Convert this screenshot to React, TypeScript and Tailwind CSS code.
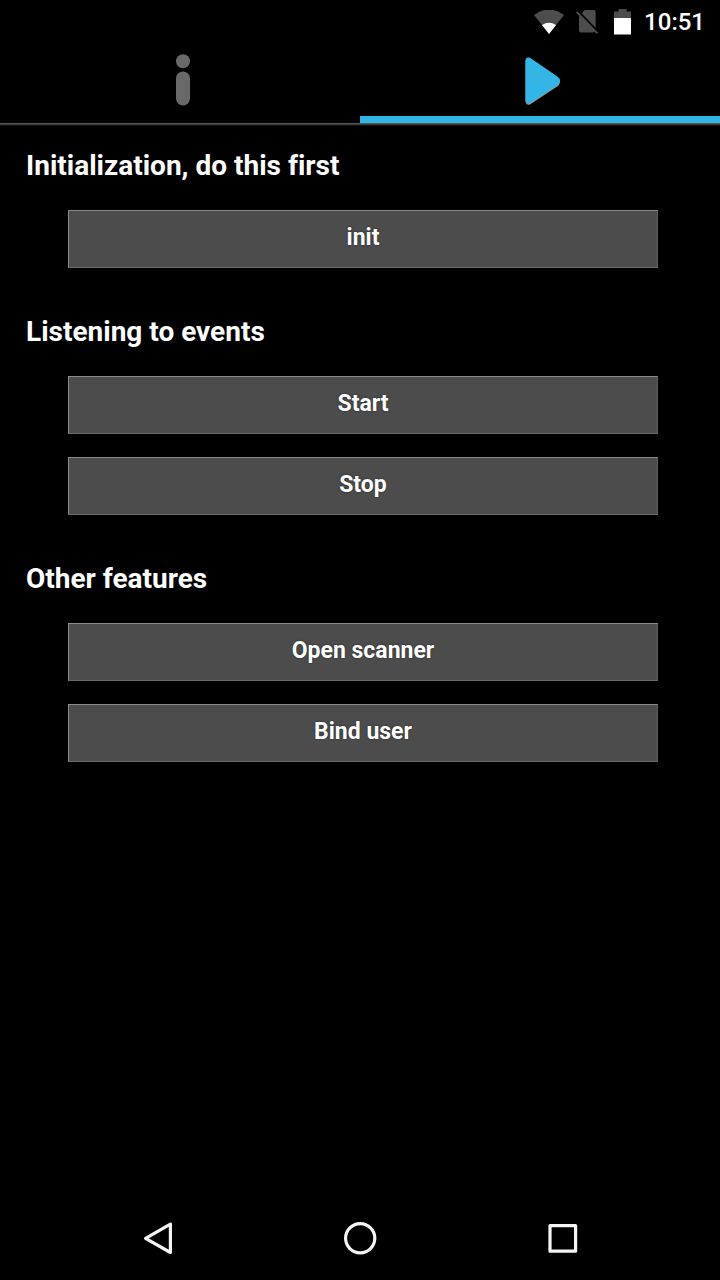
import { useState } from "react";

type Section = { title: string; actions: string[] };

const sections: Section[] = [
  { title: "Initialization, do this first", actions: ["init"] },
  { title: "Listening to events", actions: ["Start", "Stop"] },
  { title: "Other features", actions: ["Open scanner", "Bind user"] },
];

function StatusBar() {
  return (
    <header className="flex h-11 items-center justify-end pr-[15px]">
      <svg className="mr-3 h-6 w-[30px]" viewBox="0 0 30 24" aria-label="Wi-Fi">
        <path d="M0 5Q15 -6 30 5L15 24Z" fill="#4d4d4d" />
        <path d="M8 15Q15 10.5 22 15L15 24Z" fill="#fff" />
      </svg>
      <svg className="mr-4 h-6 w-[22px]" viewBox="0 0 22 24" aria-label="No SIM">
        <path d="M8.8 0H17.6Q19.6 0 19.6 2V18.4L5.4 3.8Z" fill="#4d4d4d" />
        <path d="M3 4L19 20.5Q19 22 17 22.4H5Q3 22.4 3 20.4Z" fill="#4d4d4d" />
        <path d="M0.6 1.8L21.4 23.2" stroke="#4d4d4d" strokeWidth="2" />
        <path d="M1.8 0.5L22 21.2" stroke="#000" strokeWidth="1.4" />
      </svg>
      <svg className="mr-[13px] h-[26px] w-[17px]" viewBox="0 0 17 26" aria-label="Battery">
        <path d="M0 9V2.5H4.5V0H12.5V2.5H17V9Z" fill="#4d4d4d" />
        <path d="M0 9H17V25.5H0Z" fill="#fff" />
      </svg>
      <time className="text-2xl font-medium leading-8">10:51</time>
    </header>
  );
}

const tabClass = "flex h-[79px] items-center justify-center border-b-[7px]";

export default function App() {
  const [tab, setTab] = useState("actions");
  return (
    <div className="flex min-h-screen flex-col bg-black font-['Roboto',sans-serif] text-white [font-variant-ligatures:none]">
      <StatusBar />
      <div role="tablist" className="grid grid-cols-2">
        <button
          type="button"
          role="tab"
          aria-label="Info"
          aria-selected={tab === "info"}
          onClick={() => setTab("info")}
          className={`${tabClass} pl-[6px] ${tab === "info" ? "border-[#33b5e5] text-[#33b5e5]" : "border-transparent text-[#696969]"}`}
        >
          <svg className="h-[52px] w-[14px]" viewBox="0 0 14 52" fill="currentColor">
            <circle cx="7" cy="7.3" r="7" />
            <rect width="14" height="34" y="17.5" rx="7" />
          </svg>
        </button>
        <button
          type="button"
          role="tab"
          aria-label="Actions"
          aria-selected={tab === "actions"}
          onClick={() => setTab("actions")}
          className={`${tabClass} pl-[5px] ${tab === "actions" ? "border-[#33b5e5] text-[#33b5e5]" : "border-transparent text-[#696969]"}`}
        >
          <svg className="h-[50px] w-9" viewBox="0 -2 36 50" fill="currentColor">
            <path d="M0.5 3.5Q1 0.3 4 1L32 20Q35 22 35 24Q35 27 33 29L5 47.4Q1 48.5 0.5 44.5Z" fill="#99938f" />
            <path d="M0.5 3.5Q1 -0.7 5 0.8L32 19.3Q35 21.5 35 24Q35 26.5 33 28L5 46.2Q1 47.7 0.5 43.5Z" />
          </svg>
        </button>
      </div>
      <div className="h-1 bg-linear-to-b from-[#686868] to-black" />
      <main className="flex flex-1 flex-col gap-12 pt-[23px]">
        {sections.map((section) => (
          <section key={section.title}>
            <h2 className="pl-[26px] text-[28px] font-bold leading-8">{section.title}</h2>
            <div className="mt-7 flex flex-col gap-[23px] pr-[62px] pl-[68px]">
              {section.actions.map((action) => (
                <button
                  key={action}
                  type="button"
                  className="h-[58px] border border-t-[#8c8c8c] border-r-[#5e5e5e] border-b-[#6a6a6a] border-l-[#8c8c8c] bg-[#4c4c4c] pb-0.5 text-[23px] font-bold leading-8 [text-shadow:0_0_2px_#222]"
                >
                  {action}
                </button>
              ))}
            </div>
          </section>
        ))}
      </main>
      <nav className="grid h-[84px] grid-cols-3 items-center justify-items-center px-[57px]">
        <button type="button" aria-label="Back">
          <svg className="h-9 w-9" viewBox="0 0 36 36" fill="none" stroke="#f5f5f5" strokeWidth="3.2" strokeLinejoin="round">
            <path d="M30.4 4.1V32.5L5.6 18.3Z" />
          </svg>
        </button>
        <button type="button" aria-label="Home">
          <svg className="h-9 w-9" viewBox="0 0 36 36" fill="none" stroke="#f5f5f5" strokeWidth="3.2">
            <circle cx="18.2" cy="18.3" r="14.6" />
          </svg>
        </button>
        <button type="button" aria-label="Recent apps">
          <svg className="h-9 w-9" viewBox="0 0 36 36" fill="none" stroke="#f5f5f5" strokeWidth="3.2" strokeLinejoin="round">
            <rect x="6" y="5.6" width="25.6" height="25.6" />
          </svg>
        </button>
      </nav>
    </div>
  );
}
